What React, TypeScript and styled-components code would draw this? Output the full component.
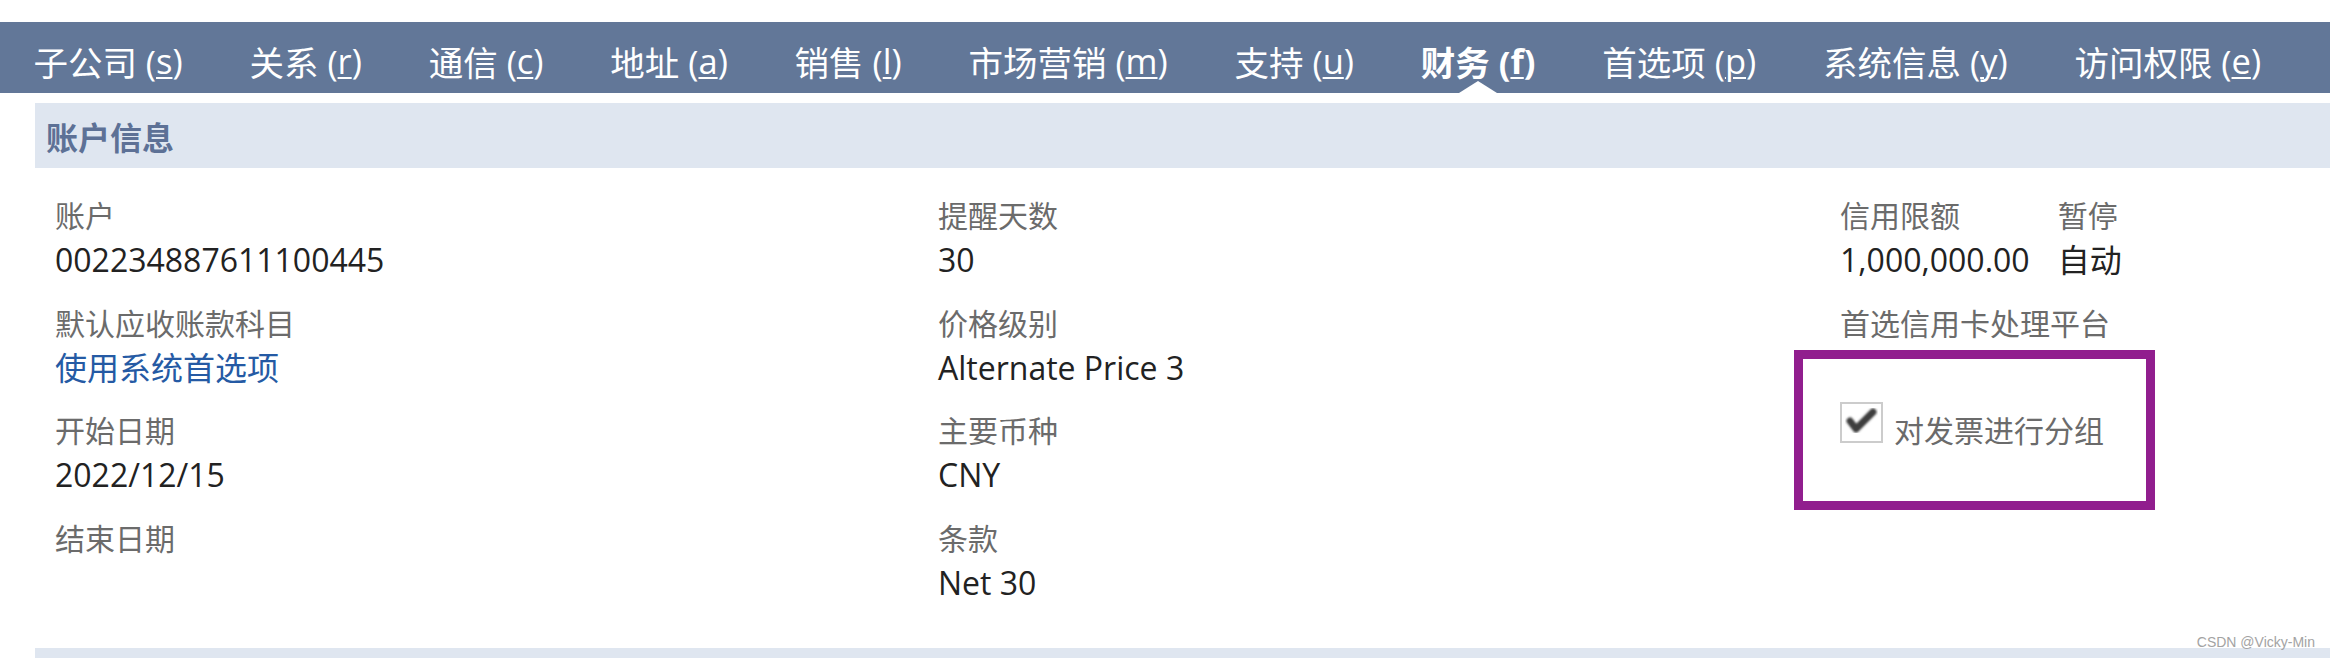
import React from "react";
import styled, { createGlobalStyle } from "styled-components";

const GlobalStyle = createGlobalStyle`
  html, body { margin: 0; padding: 0; background: #ffffff; }
  body { font-family: "Open Sans", "Noto Sans CJK SC", sans-serif; }
`;

const Page = styled.div`
  position: relative;
  width: 2330px;
  height: 658px;
  overflow: hidden;
  padding-top: 22px;
  box-sizing: border-box;
  background: #ffffff;
`;

const Nav = styled.nav`
  display: flex;
  align-items: stretch;
  height: 71px;
  background: #627798;
`;

const NavItem = styled.div<{ $active?: boolean }>`
  position: relative;
  display: flex;
  align-items: center;
  padding: 6px 33.4px 0;
  font-family: "Open Sans", "Noto Sans CJK SC", sans-serif;
  font-size: 34.5px;
  font-weight: ${(p) => (p.$active ? 700 : 400)};
  color: #ffffff;
  white-space: nowrap;
  u {
    text-decoration-thickness: 2px;
    text-underline-offset: 3px;
  }
  ${(p) =>
    p.$active &&
    `
    &::after {
      content: "";
      position: absolute;
      left: 50%;
      bottom: 0;
      transform: translateX(-50%);
      width: 0;
      height: 0;
      border-left: 19px solid transparent;
      border-right: 19px solid transparent;
      border-bottom: 12px solid #ffffff;
      filter: blur(0.4px);
    }
  `}
`;

const Main = styled.main`
  margin-top: 10px;
  margin-left: 35px;
`;

const SectionHeader = styled.div<{ $h?: number }>`
  display: flex;
  align-items: center;
  height: ${(p) => p.$h ?? 65}px;
  padding-left: 11px;
  background: #dfe6f0;
  color: #5d7196;
  font-family: "Open Sans", "Noto Sans CJK SC", sans-serif;
  font-size: 32px;
  font-weight: 700;
`;

const Content = styled.div`
  height: 480px;
  box-sizing: border-box;
  padding: 26px 0 0 20px;
  display: grid;
  grid-template-columns: 883px 902px 1fr;
  align-items: start;
`;

const Column = styled.div`
  display: flex;
  flex-direction: column;
`;

const Field = styled.div`
  display: flex;
  flex-direction: column;
  padding-bottom: 19.5px;
`;

const FieldPair = styled.div`
  display: flex;
  gap: 28px;
`;

const Label = styled.div`
  font-family: "Open Sans", "Noto Sans CJK SC", sans-serif;
  font-size: 30px;
  line-height: 43px;
  color: #6b6b6b;
  white-space: nowrap;
`;

const Value = styled.div<{ $link?: boolean }>`
  font-family: "Open Sans", "Noto Sans CJK SC", sans-serif;
  font-size: 32px;
  line-height: 45px;
  min-height: 45px;
  color: ${(p) => (p.$link ? "#255aa4" : "#222222")};
  white-space: nowrap;
`;

const CheckRow = styled.div`
  position: relative;
  display: flex;
  align-items: flex-start;
  gap: 11px;
  height: 43px;
`;

const CheckBox = styled.div`
  width: 43px;
  height: 41px;
  margin-top: -7px;
  box-sizing: border-box;
  border: 2px solid #cccccc;
  background: #ffffff;
  flex: none;
  svg { display: block; }
`;

const Highlight = styled.div`
  position: absolute;
  left: -46px;
  top: -59px;
  width: 361px;
  height: 160px;
  box-sizing: border-box;
  border: 9.5px solid #911e8e;
  pointer-events: none;
`;

const Watermark = styled.div`
  position: absolute;
  right: 15px;
  bottom: 9px;
  font-family: "Liberation Sans", Arial, sans-serif;
  font-size: 14px;
  line-height: 14px;
  color: #a3a3a3;
`;

const navItems: { text: string; key: string; active?: boolean }[] = [
  { text: "子公司", key: "s" },
  { text: "关系", key: "r" },
  { text: "通信", key: "c" },
  { text: "地址", key: "a" },
  { text: "销售", key: "l" },
  { text: "市场营销", key: "m" },
  { text: "支持", key: "u" },
  { text: "财务", key: "f", active: true },
  { text: "首选项", key: "p" },
  { text: "系统信息", key: "y" },
  { text: "访问权限", key: "e" },
];

const CheckMark = () => (
  <svg width="39" height="37" viewBox="0 0 39 37">
    <defs>
      <filter id="soft" x="-20%" y="-20%" width="140%" height="140%">
        <feGaussianBlur stdDeviation="0.9" />
      </filter>
    </defs>
    <polyline
      points="8,17 14,25 31,8"
      fill="none"
      stroke="#3c3c3c"
      strokeWidth="7"
      strokeLinecap="round"
      strokeLinejoin="round"
      filter="url(#soft)"
    />
  </svg>
);

export default function App() {
  return (
    <>
      <GlobalStyle />
      <Page>
        <Nav>
          {navItems.map((n) => (
            <NavItem key={n.key} $active={n.active}>
              {n.text} (<u>{n.key}</u>)
            </NavItem>
          ))}
        </Nav>
        <Main>
          <SectionHeader>账户信息</SectionHeader>
          <Content>
            <Column>
              <Field>
                <Label>账户</Label>
                <Value>002234887611100445</Value>
              </Field>
              <Field>
                <Label>默认应收账款科目</Label>
                <Value $link>使用系统首选项</Value>
              </Field>
              <Field>
                <Label>开始日期</Label>
                <Value>2022/12/15</Value>
              </Field>
              <Field>
                <Label>结束日期</Label>
                <Value></Value>
              </Field>
            </Column>
            <Column>
              <Field>
                <Label>提醒天数</Label>
                <Value>30</Value>
              </Field>
              <Field>
                <Label>价格级别</Label>
                <Value>Alternate Price 3</Value>
              </Field>
              <Field>
                <Label>主要币种</Label>
                <Value>CNY</Value>
              </Field>
              <Field>
                <Label>条款</Label>
                <Value>Net 30</Value>
              </Field>
            </Column>
            <Column>
              <FieldPair>
                <Field>
                  <Label>信用限额</Label>
                  <Value>1,000,000.00</Value>
                </Field>
                <Field>
                  <Label>暂停</Label>
                  <Value>自动</Value>
                </Field>
              </FieldPair>
              <Field>
                <Label>首选信用卡处理平台</Label>
                <Value></Value>
              </Field>
              <CheckRow>
                <CheckBox>
                  <CheckMark />
                </CheckBox>
                <Label>对发票进行分组</Label>
                <Highlight />
              </CheckRow>
            </Column>
          </Content>
          <SectionHeader $h={30} />
        </Main>
        <Watermark>CSDN @Vicky-Min</Watermark>
      </Page>
    </>
  );
}
